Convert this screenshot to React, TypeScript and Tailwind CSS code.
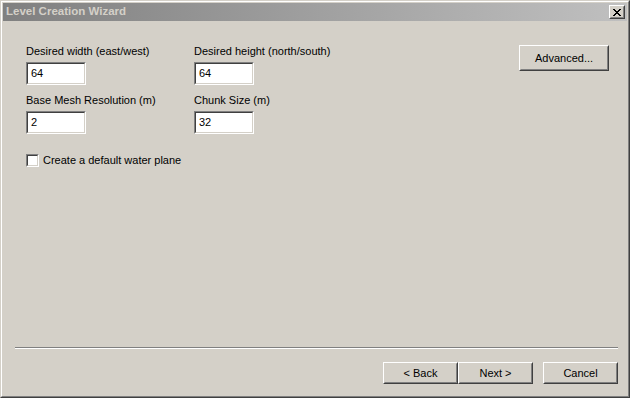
import React from 'react';

const Button = ({ label, className = '' }: { label: string; className?: string }) => (
  <div
    className={`border border-t-white border-l-white border-r-[#404040] border-b-[#404040] ${className}`}
  >
    <div className="h-full w-full border border-t-[#d4d0c8] border-l-[#d4d0c8] border-r-[#808080] border-b-[#808080] flex items-center justify-center text-black">
      {label}
    </div>
  </div>
);

const Field = ({ label, value }: { label: string; value: string }) => (
  <div className="flex flex-col">
    <span className="h-[13px] leading-[13px] text-black whitespace-nowrap">{label}</span>
    <div className="mt-[4px] w-[60px] h-[23px] border border-t-[#808080] border-l-[#808080] border-r-white border-b-white">
      <div className="h-full w-full bg-white border border-t-[#404040] border-l-[#404040] border-r-[#d4d0c8] border-b-[#d4d0c8] flex items-center pl-[3px] text-black">
        {value}
      </div>
    </div>
  </div>
);

const App = () => {
  return (
    <div className="w-[630px] h-[398px] bg-[#d4d0c8] border border-t-[#d4d0c8] border-l-[#d4d0c8] border-r-[#404040] border-b-[#404040] font-['Liberation_Sans',Arial,sans-serif] text-[11px] overflow-hidden">
      <div className="h-full border border-t-white border-l-white border-r-[#808080] border-b-[#808080] p-px flex flex-col">
        {/* Title bar */}
        <div className="h-[18px] shrink-0 flex items-center justify-between bg-gradient-to-r from-[#808080] to-[#c0c0c0] pl-[3px] pr-[2px]">
          <span className="font-bold text-[11.5px] text-[#d4d0c8] leading-none">Level Creation Wizard</span>
          <div className="w-[16px] h-[14px] bg-[#d4d0c8] border border-t-white border-l-white border-r-[#404040] border-b-[#404040]">
            <div className="h-full w-full border border-t-[#d4d0c8] border-l-[#d4d0c8] border-r-[#808080] border-b-[#808080] flex items-center justify-center">
              <svg width="8" height="7" viewBox="0 0 8 7" shapeRendering="crispEdges">
                <path d="M0 0h2v1h-2zM6 0h2v1h-2zM1 1h2v1h-2zM5 1h2v1h-2zM2 2h4v1h-4zM3 3h2v1h-2zM2 4h4v1h-4zM1 5h2v1h-2zM5 5h2v1h-2zM0 6h2v1h-2zM6 6h2v1h-2z" fill="#000" />
              </svg>
            </div>
          </div>
        </div>

        {/* Client area */}
        <div className="flex-1 flex flex-col">
          <div className="flex justify-between pr-[18px]">
            <div className="pl-[23px] pt-[24px]">
              <div className="grid grid-cols-[168px_auto] gap-y-[9px]">
                <Field label="Desired width (east/west)" value="64" />
                <Field label="Desired height (north/south)" value="64" />
                <Field label="Base Mesh Resolution (m)" value="2" />
                <Field label="Chunk Size (m)" value="32" />
              </div>
              <div className="mt-[18px] flex items-center">
                <div className="w-[13px] h-[13px] border border-t-[#808080] border-l-[#808080] border-r-white border-b-white">
                  <div className="h-full w-full bg-white border border-t-[#404040] border-l-[#404040] border-r-[#d4d0c8] border-b-[#d4d0c8]" />
                </div>
                <span className="ml-[4px] text-black">Create a default water plane</span>
              </div>
            </div>
            <Button label="Advanced..." className="mt-[24px] w-[90px] h-[26px]" />
          </div>

          <div className="flex-1" />

          <div className="pl-[12px] pr-[9px] pb-[11px]">
            <div className="h-px bg-[#808080]" />
            <div className="h-px bg-white" />
            <div className="mt-[13px] flex justify-end">
              <Button label="< Back" className="w-[75px] h-[22px]" />
              <Button label="Next >" className="w-[75px] h-[22px]" />
              <Button label="Cancel" className="ml-[10px] w-[75px] h-[22px]" />
            </div>
          </div>
        </div>
      </div>
    </div>
  );
};

export default App;
